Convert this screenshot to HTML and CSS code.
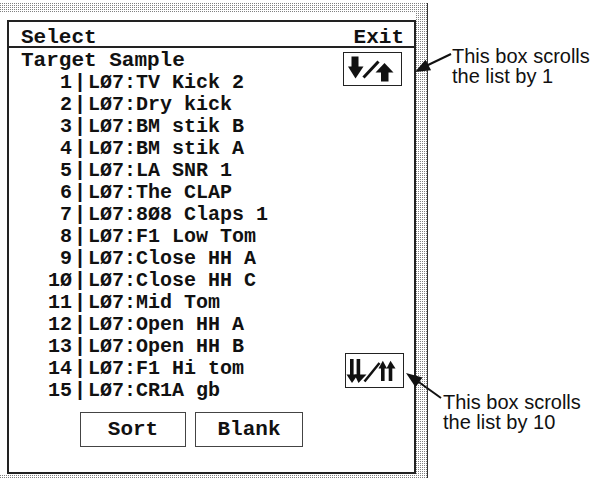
FILE: index.html
```html
<!DOCTYPE html>
<html lang="en">
<head>
    <meta charset="UTF-8">
    <title>Select Target Sample</title>
    <link rel="stylesheet" href="styles.css">
</head>
<body>
    <div class="page">
        <div class="screen">
            <div class="frame">
                <div class="window">
                    <div class="titlebar">
                        <span>Select</span>
                        <span>Exit</span>
                    </div>
                    <div class="content">
                        <div class="list">
                            <div class="list-title">Target Sample</div>
                            <div class="row"><span class="num">1</span><span class="bar">|</span>LØ7:TV Kick 2</div>
                            <div class="row"><span class="num">2</span><span class="bar">|</span>LØ7:Dry kick</div>
                            <div class="row"><span class="num">3</span><span class="bar">|</span>LØ7:BM stik B</div>
                            <div class="row"><span class="num">4</span><span class="bar">|</span>LØ7:BM stik A</div>
                            <div class="row"><span class="num">5</span><span class="bar">|</span>LØ7:LA SNR 1</div>
                            <div class="row"><span class="num">6</span><span class="bar">|</span>LØ7:The CLAP</div>
                            <div class="row"><span class="num">7</span><span class="bar">|</span>LØ7:8Ø8 Claps 1</div>
                            <div class="row"><span class="num">8</span><span class="bar">|</span>LØ7:F1 Low Tom</div>
                            <div class="row"><span class="num">9</span><span class="bar">|</span>LØ7:Close HH A</div>
                            <div class="row"><span class="num">1Ø</span><span class="bar">|</span>LØ7:Close HH C</div>
                            <div class="row"><span class="num">11</span><span class="bar">|</span>LØ7:Mid Tom</div>
                            <div class="row"><span class="num">12</span><span class="bar">|</span>LØ7:Open HH A</div>
                            <div class="row"><span class="num">13</span><span class="bar">|</span>LØ7:Open HH B</div>
                            <div class="row"><span class="num">14</span><span class="bar">|</span>LØ7:F1 Hi tom</div>
                            <div class="row"><span class="num">15</span><span class="bar">|</span>LØ7:CR1A gb</div>
                        </div>
                        <div class="scrollers">
                            <div class="scroll-box scroll-one">
                                <svg width="56" height="31" viewBox="0 0 56 31">
                                    <rect x="7.5" y="3.5" width="7" height="10.5" fill="#111"/>
                                    <polygon points="4,13.5 19.5,13.5 11.5,25.5" fill="#111"/>
                                    <line x1="19.5" y1="24.5" x2="34.5" y2="8.5" stroke="#111" stroke-width="3"/>
                                    <polygon points="40.5,10 31.5,19.5 49.5,19.5" fill="#111"/>
                                    <rect x="37" y="19" width="7.5" height="9.5" fill="#111"/>
                                </svg>
                            </div>
                            <div class="scroll-box scroll-ten">
                                <svg width="56" height="32" viewBox="0 0 56 32">
                                    <rect x="4" y="5" width="3.6" height="16" fill="#111"/>
                                    <rect x="10.6" y="5" width="3.6" height="16" fill="#111"/>
                                    <polygon points="0.5,20.5 12,20.5 6,29" fill="#111"/>
                                    <polygon points="8.5,20.5 20.5,20.5 12.5,29" fill="#111"/>
                                    <line x1="18.5" y1="27.5" x2="33.5" y2="9" stroke="#111" stroke-width="2.5"/>
                                    <polygon points="36.8,6.8 32.5,14.5 41,14.5" fill="#111"/>
                                    <polygon points="44.5,6.8 40.5,14.5 49.5,14.5" fill="#111"/>
                                    <rect x="35" y="14" width="3.6" height="13" fill="#111"/>
                                    <rect x="42.7" y="14" width="3.6" height="13" fill="#111"/>
                                </svg>
                            </div>
                        </div>
                    </div>
                    <div class="actions">
                        <div class="btn btn-sort">Sort</div>
                        <div class="btn btn-blank">Blank</div>
                    </div>
                </div>
            </div>
        </div>
        <div class="notes">
            <p class="note note-one">This box scrolls<br>the list by 1</p>
            <p class="note note-ten">This box scrolls<br>the list by 10</p>
        </div>

        <!-- callout arrows drawn over the screen shadow -->
        <svg class="callouts" width="591" height="478" viewBox="0 0 591 478">
            <line x1="451" y1="54" x2="427" y2="65.5" stroke="#111" stroke-width="2"/>
            <polygon points="415,72 431.1,70.3 425.5,59.7" fill="#111"/>
            <line x1="441" y1="398" x2="418" y2="381.5" stroke="#111" stroke-width="2"/>
            <polygon points="406,373 415.5,387.2 422.5,377.4" fill="#111"/>
        </svg>
    </div>
</body>
</html>
```

FILE: styles.css
```css
body {
    margin: 0;
    font-family: "Liberation Sans", Arial, sans-serif;
    background-color: #fff;
    color: #111;
}

.page {
    position: relative;
    display: flex;
    width: 591px;
    height: 478px;
    overflow: hidden;
}

.screen {
    margin-top: 3px;
    width: 427px;
    height: 475px;
    border-right: 1px solid #333;
    background-color: #fff;
    background-image: conic-gradient(at 1px 1px, transparent 0 75%, #808080 0);
    background-size: 2px 2px;
}

.frame {
    margin-top: 10px;
    width: 409px;
    height: 454px;
    padding: 7px 0 0 7px;
    background-color: #fff;
}

.window {
    display: flex;
    flex-direction: column;
    height: 100%;
    box-sizing: border-box;
    border: 2px solid #222;
    font-family: "Liberation Mono", "Courier New", monospace;
    font-weight: bold;
    font-size: 21px;
}

.titlebar {
    display: flex;
    justify-content: space-between;
    padding: 7px 10px 0 12px;
    line-height: 17px;
    border-bottom: 2px solid #222;
}

.content {
    display: flex;
    justify-content: space-between;
    padding: 2px 10px 0 12px;
}

.list {
    line-height: 22px;
}

.row {
    display: flex;
    padding-left: 27px;
    font-size: 20px;
    white-space: pre;
}

.num {
    width: 2ch;
    text-align: right;
}

.bar {
    width: 16px;
    text-align: center;
}

.scrollers {
    display: flex;
    flex-direction: column;
    align-items: flex-end;
    padding-top: 2px;
}

.scroll-box {
    box-sizing: border-box;
    width: 59px;
    border: 1.5px solid #222;
}

.scroll-box svg {
    display: block;
}

.scroll-one {
    height: 34px;
    margin-right: 2px;
}

.scroll-ten {
    height: 35px;
    margin-top: 267px;
}

.actions {
    display: flex;
    gap: 9px;
    padding-left: 71px;
    margin-top: 10px;
}

.btn {
    display: flex;
    align-items: center;
    justify-content: center;
    box-sizing: border-box;
    height: 35px;
    border: 1.5px solid #444;
}

.btn-sort {
    width: 106px;
}

.btn-blank {
    width: 108px;
}

.notes {
    display: flex;
    flex-direction: column;
    font-size: 20px;
    white-space: nowrap;
}

.note {
    margin: 0;
    line-height: 20px;
}

.note-one {
    margin: 46px 0 0 24px;
}

.note-ten {
    margin: 306px 0 0 15px;
}

.callouts {
    position: absolute;
    top: 0;
    left: 0;
    pointer-events: none;
}
```
